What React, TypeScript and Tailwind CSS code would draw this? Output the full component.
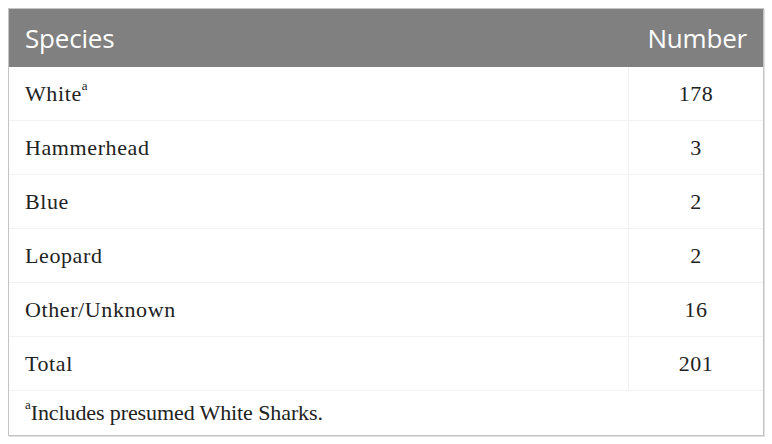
const rows: [string, string, boolean?][] = [
  ['White', '178', true],
  ['Hammerhead', '3'],
  ['Blue', '2'],
  ['Leopard', '2'],
  ['Other/Unknown', '16'],
  ['Total', '201'],
]

export default function App() {
  return (
    <div className="w-[772px] h-[444px] bg-white pt-2 pl-2">
      <div className="w-[756px] border border-[#c4c4c4] shadow-[1px_1px_0_#e0e0e0]">
        <div className="flex h-[58px] items-center bg-[#808080] text-white text-[26px] font-['Open_Sans','Liberation_Sans',sans-serif] tracking-[-0.2px]">
          <div className="flex-1 pl-[16px]">Species</div>
          <div className="w-[135px] pr-[16px] text-right">Number</div>
        </div>
        <div className="font-['Liberation_Serif',serif] text-[22px] text-[#222]">
          {rows.map(([name, num, sup]) => (
            <div key={name} className="flex h-[54px] border-b border-[#f2f2f2]">
              <div className="flex-1 flex items-center pl-[16px] tracking-[0.6px]">
                {name}
                {sup && <sup className="text-[13px] -top-[8px] relative align-baseline tracking-normal">a</sup>}
              </div>
              <div className="w-[135px] border-l border-[#f0f0f0] flex items-center justify-center tracking-[0.5px]">{num}</div>
            </div>
          ))}
          <div className="h-[44px] flex items-center pl-[16px] pb-[1px] tracking-[-0.1px]">
            <sup className="text-[13px] relative -top-[8px] align-baseline">a</sup>Includes presumed White Sharks.
          </div>
        </div>
      </div>
    </div>
  )
}
